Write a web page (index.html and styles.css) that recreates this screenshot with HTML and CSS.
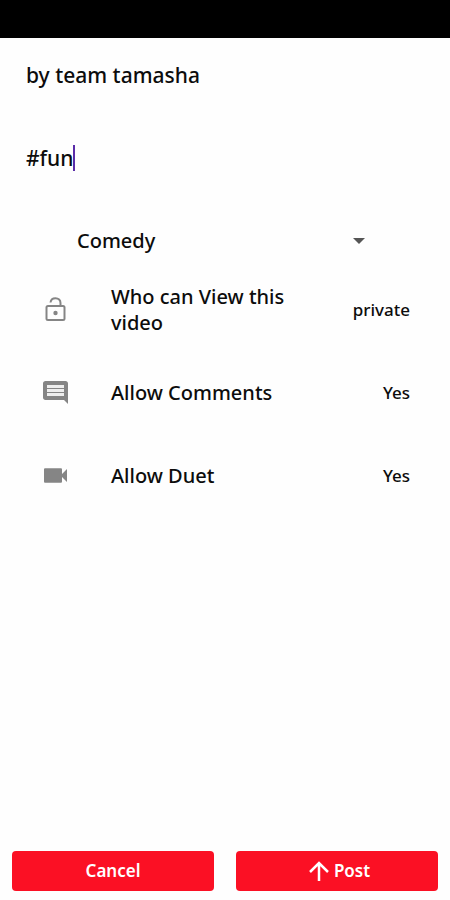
FILE: index.html
```html
<!DOCTYPE html>
<html lang="en">
<head>
<meta charset="utf-8">
<meta name="viewport" content="width=device-width, initial-scale=1">
<title>Post video</title>
<link rel="stylesheet" href="styles.css">
</head>
<body>
<div class="status-bar"></div>
<form class="post-form">
  <div class="fields">
    <input class="text-field" type="text" aria-label="Description" value="by team tamasha">
    <div class="tag-field">
      <input class="text-field tag-input" type="text" aria-label="Hashtags" value="#fun">
      <span class="caret"></span>
    </div>
    <div class="category">
      <select class="category-select" aria-label="Category">
        <option>Comedy</option>
      </select>
      <svg class="category-arrow" viewBox="0 0 12 6" aria-hidden="true"><path d="M0 0h12L6 6z"/></svg>
    </div>
  </div>
  <div class="settings">
    <div class="setting">
      <svg class="icon" viewBox="0 0 28 28" aria-hidden="true"><path class="icon-outline" d="M6 10h15a1.500 1.500 0 0 1 1.500 1.500v11a1.500 1.500 0 0 1-1.500 1.500H6a1.500 1.500 0 0 1-1.500-1.500v-11A1.500 1.500 0 0 1 6 10zM8.500 6.500C8.800 3.800 10.800 2.200 13.500 2.200c3 0 5 2 5 4.800v3"/><circle cx="13.500" cy="17" r="2.200"/></svg>
      <label class="setting-label" for="privacy">Who can View this video</label>
      <button class="setting-value" id="privacy" type="button">private</button>
    </div>
    <div class="setting">
      <svg class="icon" viewBox="0 0 28 28" aria-hidden="true"><path d="M26 4.500C26 3 25 2 23.500 2h-20C2 2 1 3 1 4.500v14C1 20 2 21 3.500 21H22l4 4z"/><path class="icon-lines" d="M5 6h17v3H5zM5 10h17v3H5zM5 14h17v3H5z"/></svg>
      <label class="setting-label" for="comments">Allow Comments</label>
      <button class="setting-value" id="comments" type="button">Yes</button>
    </div>
    <div class="setting">
      <svg class="icon" viewBox="0 0 28 28" aria-hidden="true"><path d="M20 12V7.500c0-.8-.5-1.300-1.300-1.300H3.300C2.500 6.200 2 6.700 2 7.500v12c0 .8.5 1.300 1.300 1.300h15.400c.8 0 1.300-.5 1.300-1.300V15l5 5V7z"/></svg>
      <label class="setting-label" for="duet">Allow Duet</label>
      <button class="setting-value" id="duet" type="button">Yes</button>
    </div>
  </div>
  <div class="actions">
    <button class="action" type="button">Cancel</button>
    <button class="action action-post" type="submit">
      <svg class="action-icon" viewBox="0 0 20 20" aria-hidden="true"><path d="M10 20V2M1 11l9-9 9 9"/></svg>
      Post
    </button>
  </div>
</form>
</body>
</html>
```
FILE: styles.css
```css
* {
  box-sizing: border-box;
}

body {
  margin: 0;
  min-height: 100vh;
  display: flex;
  flex-direction: column;
  background: #fefefe;
  color: #0c0c0c;
  font: 500 20px/26px "Noto Sans", sans-serif;
}

input,
select,
button {
  margin: 0;
  padding: 0;
  border: 0;
  background: none;
  color: inherit;
  font: inherit;
  outline: none;
}

.status-bar {
  height: 38px;
  background: #000;
}

.post-form {
  flex: 1;
  display: flex;
  flex-direction: column;
  padding-top: 24px;
}

.fields {
  display: flex;
  flex-direction: column;
  gap: 57px;
  padding: 0 26px;
}

.text-field {
  height: 26px;
  font-size: 21px;
}

.tag-field {
  display: flex;
  align-items: center;
}

.tag-input {
  field-sizing: content;
}

.caret {
  width: 2px;
  height: 26px;
  background: #5a2ca8;
}

.category {
  display: flex;
  align-items: center;
  padding: 0 59px 0 51px;
}

.category-select {
  flex: 1;
  height: 26px;
  appearance: none;
}

.category-arrow {
  width: 12px;
  height: 6px;
  fill: #555;
  pointer-events: none;
}

.settings {
  display: flex;
  flex-direction: column;
  gap: 31px;
  padding: 30px 40px 30px 42px;
}

.setting {
  min-height: 52px;
  display: flex;
  align-items: center;
}

.icon {
  flex: none;
  width: 28px;
  height: 28px;
  margin-right: 41px;
  fill: #858585;
}

.icon-outline {
  fill: none;
  stroke: #858585;
  stroke-width: 2;
}

.icon-lines {
  fill: #eee;
}

.setting-label {
  flex: 1;
  padding-right: 40px;
}

.setting-value {
  font-size: 17px;
}

.actions {
  display: grid;
  grid-template-columns: 1fr 1fr;
  gap: 22px;
  margin-top: auto;
  padding: 0 12px 9px;
}

.action {
  height: 40px;
  display: flex;
  align-items: center;
  justify-content: center;
  gap: 5px;
  border-radius: 4px;
  background: #fb1024;
  color: #fff;
  font-size: 17px;
  font-weight: 600;
}

.action-post {
  padding-left: 5px;
}

.action-icon {
  width: 20px;
  height: 20px;
  fill: none;
  stroke: #fff;
  stroke-width: 2.5;
}
```
